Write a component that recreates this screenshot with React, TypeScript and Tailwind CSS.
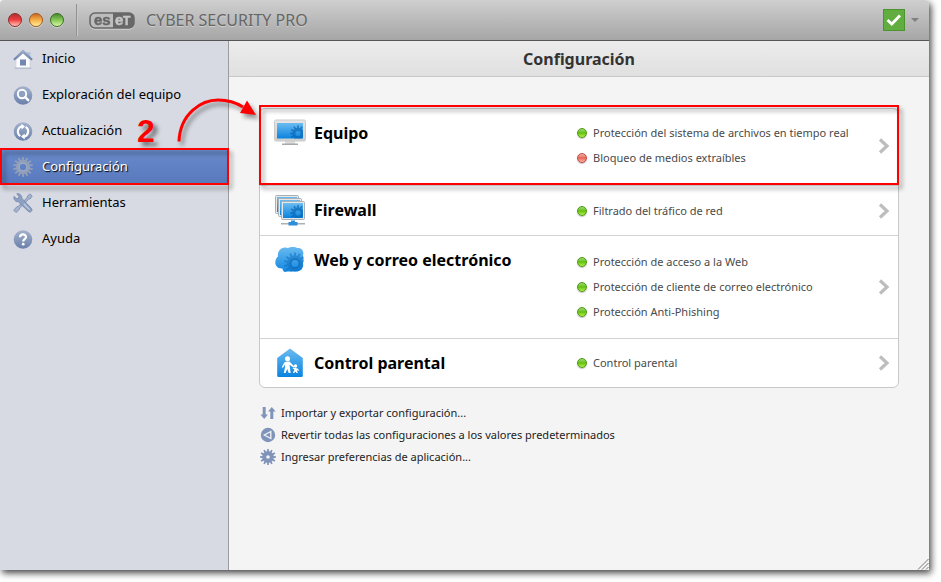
import type { ReactNode } from 'react';
import { clsx } from 'clsx';

type Status = { label: string; ok: boolean };

type Section = {
  id: string;
  title: string;
  icon: ReactNode;
  rowClass: string;
  statuses: Status[];
};

// outline of a cog wheel: teeth are short trapezoids around a circle
function gearPath(cx: number, cy: number, outer: number, inner: number, hole: number, teeth: number) {
  const step = (Math.PI * 2) / teeth;
  const points: string[] = [];
  for (let i = 0; i < teeth; i++) {
    const a = i * step;
    [
      [inner, -0.3],
      [outer, -0.2],
      [outer, 0.2],
      [inner, 0.3]
    ].forEach(([r, k]) => {
      points.push(`${(cx + r * Math.sin(a + k * step)).toFixed(2)} ${(cy - r * Math.cos(a + k * step)).toFixed(2)}`);
    });
  }
  return `M${points.join('L')}ZM${cx - hole} ${cy}a${hole} ${hole} 0 1 0 ${hole * 2} 0a${hole} ${hole} 0 1 0 ${-hole * 2} 0Z`;
}

function Gradients() {
  return (
    <svg className="absolute h-0 w-0" aria-hidden="true">
      <defs>
        <linearGradient id="steel" x1="0" y1="0" x2="0" y2="1">
          <stop offset="0" stopColor="#a3b1cc" />
          <stop offset="1" stopColor="#6a80ab" />
        </linearGradient>
        <linearGradient id="sky" x1="0" y1="0" x2="0" y2="1">
          <stop offset="0" stopColor="#6cbcf0" />
          <stop offset="1" stopColor="#0a83e0" />
        </linearGradient>
        <linearGradient id="bezel" x1="0" y1="0" x2="0" y2="1">
          <stop offset="0" stopColor="#e6e6e6" />
          <stop offset="1" stopColor="#cfcfcf" />
        </linearGradient>
        <clipPath id="screen">
          <rect x="3" y="4" width="26" height="15.500" />
        </clipPath>
        <clipPath id="front-screen">
          <rect x="9" y="9" width="20" height="15" />
        </clipPath>
        <clipPath id="cloud">
          <path d="M4 10.500C3 5 8 0 13.500 2c3-1.500 8-1.500 10 0 4-.5 7 3 5.500 7.500.8 2.500 1 5 0 7.500 1 5-2.500 8.700-7.500 8.500H13c-2 1-4.500 0-4.500-3C3.500 23 .5 19 1.500 15c.3-2 1-3.500 2.500-4.500Z" />
        </clipPath>
      </defs>
    </svg>
  );
}

function HomeIcon() {
  return (
    <svg viewBox="0 0 20 20" className="h-5 w-5">
      <path d="M13.500 3h4v5l-4-3.500Z" fill="#b4c2da" />
      <path d="M3 10.500 10 4l7 6.500V19H3Z" fill="#fbfcfe" stroke="#c3ccdc" strokeWidth=".6" />
      <path d="M10 .5.2 10l1.400 1.400L10 4.500l8.400 6.900 1.400-1.400Z" fill="url(#steel)" />
      <path d="M7 10.500h6v6H7Z" fill="#7288b2" />
      <path d="M1.500 18.700h17v.9h-17Z" fill="#a5b1c8" />
    </svg>
  );
}

function ScanIcon() {
  return (
    <svg viewBox="0 0 20 20" className="h-5 w-5">
      <circle cx="10" cy="10.500" r="9.300" fill="url(#steel)" />
      <circle cx="9" cy="9" r="4.200" fill="#8fa1c3" stroke="#fff" strokeWidth="1.900" />
      <path d="m12.200 12.200 3 3" stroke="#fff" strokeWidth="2.400" strokeLinecap="round" />
    </svg>
  );
}

function UpdateIcon() {
  return (
    <svg viewBox="0 0 20 20" className="h-5 w-5">
      <circle cx="10" cy="10.500" r="9.300" fill="url(#steel)" />
      <path d="M7.400 15.200A5.400 5.400 0 0 1 9.400 5.300M12.600 5.800a5.400 5.400 0 0 1-2 9.900" fill="none" stroke="#fff" strokeWidth="2.100" />
      <path d="M8.300 2.800 12 5.400 8.600 8.600ZM11.700 12.400v6L8 15.600Z" fill="#fff" />
    </svg>
  );
}

function SettingsIcon() {
  return (
    <svg viewBox="0 0 20 20" className="h-5 w-5">
      <path d={gearPath(10, 10, 10, 7, 3.6, 14)} fill="#929fb8" fillRule="evenodd" />
      <circle cx="10" cy="10" r="3.900" fill="none" stroke="#a8b4c9" strokeWidth=".8" />
    </svg>
  );
}

function ToolsIcon() {
  return (
    <svg viewBox="0 0 20 20" className="h-5 w-5">
      <path
        d="M17 .9 19.200 3l-1.900 2.700-1.600.4-8.800 8.700-.6 1.600L3 19.500.7 17.200l3.200-3.400 1.500-.5L14.200 4.600l.4-1.700Z"
        fill="#a6b4ce"
        stroke="#7187b0"
        strokeWidth=".8"
      />
      <path
        d="M1 3.400 3.500 5.700l2-.4.500-2L3.800.8c2.900-.6 5.200 1.400 5 4.400l2.400 2.600 7.300 7.700c1.600 2-1 4.600-3 3L8 11.400 5.200 8.600C2.500 9 .3 6.400 1 3.400Z"
        fill="#8fa1c2"
        stroke="#6d83ad"
        strokeWidth=".8"
      />
      <path d="m11 11 5.500 5.700" stroke="#c3cee0" strokeWidth="1.200" />
    </svg>
  );
}

function HelpIcon() {
  return (
    <svg viewBox="0 0 20 20" className="h-5 w-5">
      <circle cx="10" cy="10.500" r="9.300" fill="url(#steel)" />
      <path d="M7 8.200c.1-3.700 6-3.600 6-.3 0 2.300-2.700 2.200-2.800 4.600" fill="none" stroke="#fff" strokeWidth="2.200" />
      <circle cx="10.200" cy="15.200" r="1.400" fill="#fff" />
    </svg>
  );
}

function ComputerIcon() {
  return (
    <svg viewBox="0 0 32 28" className="h-7 w-8">
      <path d="M11 22h10v3H11Z" fill="#dcdcdc" />
      <path d="M8 24.500h16V26H8Z" fill="#a9a9a9" />
      <rect x=".5" y="1" width="31" height="21" rx="1.500" fill="url(#bezel)" stroke="#cacaca" />
      <rect x="3" y="4" width="26" height="15.500" fill="url(#sky)" />
      <g clipPath="url(#screen)">
        <path d={gearPath(24, 14.5, 8, 5.6, 2.6, 12)} fill="#0866b5" fillOpacity=".7" fillRule="evenodd" />
      </g>
    </svg>
  );
}

function FirewallIcon() {
  return (
    <svg viewBox="0 0 32 32" className="h-8 w-8">
      {[0, 3, 6].map((n) => (
        <g key={n}>
          <rect x={1.5 + n} y={1.5 + n} width="23" height="18" rx="1" fill="#e8e8e8" stroke="#a9b0b6" />
          <rect x={3 + n} y={3 + n} width="20" height="15" fill="url(#sky)" />
        </g>
      ))}
      <g clipPath="url(#front-screen)">
        <path d={gearPath(24, 19, 8, 5.6, 2.6, 12)} fill="#0866b5" fillOpacity=".7" fillRule="evenodd" />
      </g>
      <path d="M7 29h24v1.500H7Z" fill="#a9b0b6" />
      <path d="M17 26.500h4V28h2.500v3.500h-9V28H17Z" fill="#2f8ed8" />
    </svg>
  );
}

function WebIcon() {
  return (
    <svg viewBox="0 0 32 28" className="h-7 w-8">
      <g clipPath="url(#cloud)">
        <path d="M0 0h32v28H0Z" fill="url(#sky)" />
        <path d={gearPath(21, 17.5, 11, 8, 3.5, 14)} fill="#0866b5" fillOpacity=".45" fillRule="evenodd" />
        <circle cx="21" cy="17.500" r="4.600" fill="none" stroke="#0866b5" strokeOpacity=".5" strokeWidth="1.500" />
      </g>
    </svg>
  );
}

function ParentalIcon() {
  return (
    <svg viewBox="0 0 32 32" className="h-8 w-8">
      <path d="M16 1.500 28.800 11v17.500q0 1.500-1.500 1.500H4.700q-1.500 0-1.500-1.500V11Z" fill="url(#sky)" />
      <circle cx="13.500" cy="11.800" r="2.500" fill="#fff" />
      <path d="M13 14.500h2.500L20.300 19.500l-.9 1-3.900-2.700.5 3.200.6 5h-1.900l-1.400-4-1.800 4H9.800l1.200-5.500v-3l-2 3.300-1.300-.6 2.600-4.700Z" fill="#fff" />
      <circle cx="21.500" cy="19" r="1.700" fill="#fff" />
      <path d="m19 20.800 2.300.2 2.400.6 1.300 1.700-.8.8-1.300-1 .2 1.200.8 1.800h-1.400l-1-1.500-1.400 1.500h-1.300l1.300-2.500.1-1.400-1.600-.6Z" fill="#fff" />
    </svg>
  );
}

function TransferIcon() {
  return (
    <svg viewBox="0 0 16 16" className="h-4 w-4">
      <path d="M2.700 2h3v7.500H8l-3.800 4.500L.4 9.500h2.300ZM10.300 14h3V6.500h2.300L11.800 2 8 6.500h2.300Z" fill="#8093b9" />
    </svg>
  );
}

function RevertIcon() {
  return (
    <svg viewBox="0 0 16 16" className="h-4 w-4">
      <circle cx="8" cy="8" r="7.200" fill="#8093b9" />
      <path d="M10.800 4.500v7L4.300 8Z" fill="none" stroke="#f2f5fa" strokeWidth="1.300" />
    </svg>
  );
}

function PreferencesIcon() {
  return (
    <svg viewBox="0 0 16 16" className="h-4 w-4">
      <path d={gearPath(8, 8, 8, 5.8, 1.8, 12)} fill="#8093b9" fillRule="evenodd" />
    </svg>
  );
}

const navItems = [
  { label: 'Inicio', icon: <HomeIcon /> },
  { label: 'Exploración del equipo', icon: <ScanIcon /> },
  { label: 'Actualización', icon: <UpdateIcon /> },
  { label: 'Configuración', icon: <SettingsIcon />, active: true },
  { label: 'Herramientas', icon: <ToolsIcon /> },
  { label: 'Ayuda', icon: <HelpIcon /> }
];

const sections: Section[] = [
  {
    id: 'equipo',
    title: 'Equipo',
    icon: <ComputerIcon />,
    rowClass: 'min-h-[77px] pb-[3px]',
    statuses: [
      { label: 'Protección del sistema de archivos en tiempo real', ok: true },
      { label: 'Bloqueo de medios extraíbles', ok: false }
    ]
  },
  {
    id: 'firewall',
    title: 'Firewall',
    icon: <FirewallIcon />,
    rowClass: 'min-h-[50px]',
    statuses: [{ label: 'Filtrado del tráfico de red', ok: true }]
  },
  {
    id: 'web',
    title: 'Web y correo electrónico',
    icon: <WebIcon />,
    rowClass: 'min-h-[103px]',
    statuses: [
      { label: 'Protección de acceso a la Web', ok: true },
      { label: 'Protección de cliente de correo electrónico', ok: true },
      { label: 'Protección Anti-Phishing', ok: true }
    ]
  },
  {
    id: 'parental',
    title: 'Control parental',
    icon: <ParentalIcon />,
    rowClass: 'min-h-12',
    statuses: [{ label: 'Control parental', ok: true }]
  }
];

const links = [
  { label: 'Importar y exportar configuración...', icon: <TransferIcon /> },
  { label: 'Revertir todas las configuraciones a los valores predeterminados', icon: <RevertIcon /> },
  { label: 'Ingresar preferencias de aplicación...', icon: <PreferencesIcon /> }
];

const windowButtons = [
  { label: 'Cerrar', style: 'border-[#8c2a2a] from-[#b03030] via-[#f03c42] to-[#ffc0b8]' },
  { label: 'Minimizar', style: 'border-[#a2581f] from-[#cc6a28] via-[#f7b046] to-[#fff09a]' },
  { label: 'Ampliar', style: 'border-[#3a6e24] from-[#4b8a34] via-[#86c956] to-[#d6f7a4]' }
];

function StatusDot({ ok }: { ok: boolean }) {
  return (
    <span
      className={clsx(
        'h-[10px] w-[10px] shrink-0 rounded-full border bg-linear-to-b shadow-[0_1px_1px_rgba(0,0,0,0.25)]',
        ok ? 'border-[#4a9a12] from-[#9ed86c] via-[#62c000] to-[#b8f04a]' : 'border-[#c4473c] from-[#f4b0a6] via-[#e4675a] to-[#ffb4a6]'
      )}
    />
  );
}

function TitleBar() {
  return (
    <header className="flex h-[41px] items-center rounded-t border-b border-[#555] bg-linear-to-b from-[#cfcfcf] to-[#a6a6a6] pr-[10px] pl-2">
      <div className="flex gap-[7px]">
        {windowButtons.map((button) => (
          <button
            key={button.label}
            aria-label={button.label}
            className={clsx('h-[14px] w-[14px] rounded-full border bg-linear-to-b shadow-[0_1px_0_rgba(255,255,255,0.4)]', button.style)}
          />
        ))}
      </div>
      <span className="ml-3 h-8 w-px bg-[#939393] shadow-[1px_0_0_#c8c8c8]" />
      <svg viewBox="0 0 46 17" className="ml-3 h-[17px] w-[46px] drop-shadow-[0_1px_0_#cfcfcf]" role="img" aria-label="eset">
        <rect x="1" y="1" width="44" height="15" rx="5" fill="#bdbdbd" stroke="#686868" strokeWidth="1.600" />
        <path d="M24 1h16a5 5 0 0 1 5 5v5a5 5 0 0 1-5 5H24Z" fill="#686868" />
        <text x="5" y="13" fill="#686868" stroke="#686868" strokeWidth=".5" className="font-['Liberation_Sans'] text-[15px] font-bold">
          es
        </text>
        <text x="26" y="13" fill="#c6c6c6" stroke="#c6c6c6" strokeWidth=".5" className="font-['Liberation_Sans'] text-[15px] font-bold">
          e
        </text>
        <text x="34" y="13" fill="#c6c6c6" stroke="#c6c6c6" strokeWidth=".5" className="font-['Liberation_Sans'] text-[12px] font-bold">
          T
        </text>
      </svg>
      <span className="ml-[11px] flex-1 text-base text-[#666] [text-shadow:0_1px_0_#cfcfcf]">CYBER SECURITY PRO</span>
      <button aria-label="Estado de la protección" className="flex items-center gap-[6px]">
        <span className="flex h-[22px] w-[22px] items-center justify-center border border-[#4c9430] bg-[#62ad40]">
          <svg viewBox="0 0 16 14" className="h-[14px] w-4">
            <path d="m1.500 7 4.300 4L14 2.500" fill="none" stroke="#fff" strokeWidth="2.800" />
          </svg>
        </span>
        <svg viewBox="0 0 8 4" className="h-1 w-2">
          <path d="M0 0h8L4 4Z" fill="#808080" />
        </svg>
      </button>
    </header>
  );
}

function Sidebar() {
  return (
    <nav className="relative w-[229px] shrink-0 border-r border-[#9c9c9c] bg-[#d7dae2]">
      {navItems.map((item) => (
        <a
          key={item.label}
          href="#"
          className={clsx(
            'relative flex h-9 items-center gap-[9px] pl-[13px] text-[13px]',
            item.active ? 'bg-linear-to-b from-[#698ccc] to-[#5878bc] text-white [text-shadow:1px_1px_1px_#000]' : 'text-black'
          )}
        >
          {item.icon}
          <span>{item.label}</span>
          {item.active && (
            <span className="absolute -top-px -right-px bottom-0 left-0 z-10 border-2 border-[#f00] drop-shadow-[3px_4px_2px_rgba(0,0,0,0.4)]" />
          )}
        </a>
      ))}
      <span className="absolute top-[72px] left-[137px] font-['Liberation_Sans'] text-[32px] leading-9 font-bold text-[#f00] [text-shadow:4px_4px_4px_rgba(0,0,0,0.5)]">
        2
      </span>
      <svg viewBox="0 0 84 54" className="absolute top-[52px] left-[174px] z-20 h-[54px] w-[84px] drop-shadow-[3px_4px_2px_rgba(0,0,0,0.4)]">
        <path d="M5 48.500C6 20 28 7 44 7c10 0 18 2.500 25 7" fill="none" stroke="#f00" strokeWidth="3" />
        <path d="m73 7.500 9 14.500-16-2Z" fill="#f00" />
      </svg>
    </nav>
  );
}

function SectionRow({ section, highlighted }: { section: Section; highlighted: boolean }) {
  return (
    <a href="#" className={clsx('relative flex border-b border-[#d3d3d3] pr-2 pl-[14px] last:border-b-0', section.rowClass)}>
      <div className="flex h-12 w-[303px] shrink-0 items-center gap-2">
        {section.icon}
        <h2 className="text-base font-bold text-black">{section.title}</h2>
      </div>
      <ul className="flex flex-1 flex-col justify-center gap-[7px] text-[11px] leading-[18px] text-[#4a4a4a]">
        {section.statuses.map((status) => (
          <li key={status.label} className="flex items-center gap-[6px]">
            <StatusDot ok={status.ok} />
            {status.label}
          </li>
        ))}
      </ul>
      <svg viewBox="0 0 12 16" className="h-4 w-3 self-center">
        <path d="m2 1.500 7 6.500-7 6.500" fill="none" stroke="#bdbdbd" strokeWidth="3.200" />
      </svg>
      {highlighted && (
        <span className="absolute -top-[4px] -right-px -left-px bottom-0 z-10 border-2 border-[#f00] drop-shadow-[3px_4px_2px_rgba(0,0,0,0.4)]" />
      )}
    </a>
  );
}

export default function App() {
  return (
    <div className="flex min-h-screen bg-white pr-3 pb-3 font-['Noto_Sans',sans-serif]">
      <Gradients />
      <div className="flex flex-1 flex-col rounded-t shadow-[2px_3px_7px_rgba(0,0,0,0.75)]">
        <TitleBar />
        <div className="flex flex-1">
          <Sidebar />
          <main className="relative flex-1 bg-[#f4f4f4]">
            <h1 className="flex h-9 items-center justify-center border-b border-[#c9c9c9] bg-linear-to-b from-[#ececec] to-[#e0e0e0] text-base font-bold text-[#333]">
              Configuración
            </h1>
            <div className="px-[30px] pt-[31px]">
              <div className="rounded-md border border-[#c8c8c8] bg-white">
                {sections.map((section) => (
                  <SectionRow key={section.id} section={section} highlighted={section.id === 'equipo'} />
                ))}
              </div>
              <ul className="mt-[14px] pl-px text-[11px] leading-[22px] text-[#222]">
                {links.map((link) => (
                  <li key={link.label}>
                    <a href="#" className="flex items-center gap-[5px]">
                      {link.icon}
                      {link.label}
                    </a>
                  </li>
                ))}
              </ul>
            </div>
            <svg viewBox="0 0 12 12" className="absolute right-0 bottom-0 h-3 w-3">
              <path d="M1 11.500 11.500 1M5 11.500l6.500-6.500M9 11.500l2.500-2.500" stroke="#777" fill="none" />
            </svg>
          </main>
        </div>
      </div>
    </div>
  );
}
